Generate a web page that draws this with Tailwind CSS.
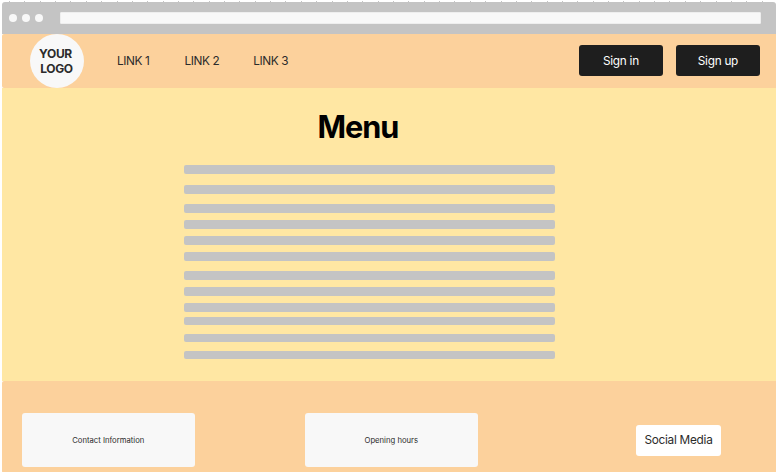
<!DOCTYPE html>
<html lang="en">
<head>
<meta charset="utf-8">
<title>Menu</title>
<script src="https://cdn.jsdelivr.net/npm/@tailwindcss/browser@4"></script>
</head>
<body class="h-[472px] w-[776px] overflow-hidden bg-white pl-[2px] font-[Inter,sans-serif] text-[#2b2b2b]">
  <div class="h-[2px] pt-px"><div class="ml-[7px] h-px bg-[repeating-linear-gradient(90deg,#c4c4c4_0_1px,transparent_1px_15.36px)]"></div></div>
  <header class="flex h-8 items-center rounded-t-[3px] bg-[#c4c4c4] pl-[7px]">
    <div class="flex gap-[5px]">
      <i class="size-2 rounded-full bg-[#f8f8f8]"></i>
      <i class="size-2 rounded-full bg-[#f8f8f8]"></i>
      <i class="size-2 rounded-full bg-[#f8f8f8]"></i>
    </div>
    <div class="ml-[17px] h-3 w-[700.5px] rounded-[1px] border border-[#eeeeee] bg-[#f8f8f8]"></div>
  </header>
  <nav class="flex h-[53.5px] items-center rounded-l-[2px] bg-[#fcd19c] text-[11.8px] tracking-[-0.27px]">
    <div class="ml-[27.5px] flex size-[54px] shrink-0 items-center justify-center rounded-full bg-[#f8f8f8] text-center text-[12px] font-bold leading-[15.4px] tracking-[-0.35px]"><span class="pt-px"><span class="pr-[2px]">YOUR</span><br>LOGO</span></div>
    <a class="ml-[33.5px] w-[67.5px] pt-[3px] tracking-[-0.4px]">LINK 1</a>
    <a class="w-[68.7px] pt-[3px] tracking-[-0.4px]">LINK 2</a>
    <a class="pt-[3px] tracking-[-0.4px]">LINK 3</a>
    <div class="ml-auto mr-[15.7px] flex gap-[12.2px] text-white">
      <button class="h-[31px] w-[84.8px] rounded-[3px] bg-[#1e1e1e] pt-[3px]">Sign in</button>
      <button class="h-[31px] w-[84.8px] rounded-[3px] bg-[#1e1e1e] pt-[3px]">Sign up</button>
    </div>
  </nav>
  <main class="h-[293px] bg-[#ffe7a3] pt-[20px]">
    <h1 class="ml-[315.5px] text-[30.7px] font-bold leading-[38px] tracking-[-1.1px] text-black">Menu</h1>
    <div class="ml-[182.2px] mt-[19.8px] w-[371.2px] *:rounded-[2px] *:bg-[#c4c4c4]">
      <div class="h-[9px]"></div>
      <div class="mt-[10.5px] h-[9px]"></div>
      <div class="mt-[10.4px] h-[9px]"></div>
      <div class="mt-[7px] h-[9px]"></div>
      <div class="mt-[7px] h-[9px]"></div>
      <div class="mt-[7px] h-[9px]"></div>
      <div class="mt-[9.5px] h-[9px]"></div>
      <div class="mt-[7px] h-[9px]"></div>
      <div class="mt-[7px] h-[9px]"></div>
      <div class="mt-[5.8px] h-[8px]"></div>
      <div class="mt-[8.5px] h-[8px]"></div>
      <div class="mt-[9px] h-[8px]"></div>
    </div>
  </main>
  <footer class="flex h-[92px] items-start rounded-l-[2px] bg-[#fcd19c] pl-[20px] pt-[32.5px] text-[7.7px]">
    <div class="flex h-[54px] w-[172.5px] items-center justify-center rounded-[3px] bg-[#f8f8f8] pt-px">Contact Information</div>
    <div class="ml-[110.5px] flex h-[54px] w-[172.6px] items-center justify-center rounded-[3px] bg-[#f8f8f8] pt-px">Opening hours</div>
    <div class="ml-[158.4px] mt-[11.5px] flex h-[31px] w-[85px] items-center justify-center rounded-[3px] bg-white pt-[2px] text-[11.8px] tracking-[-0.27px]">Social Media</div>
  </footer>
</body>
</html>
